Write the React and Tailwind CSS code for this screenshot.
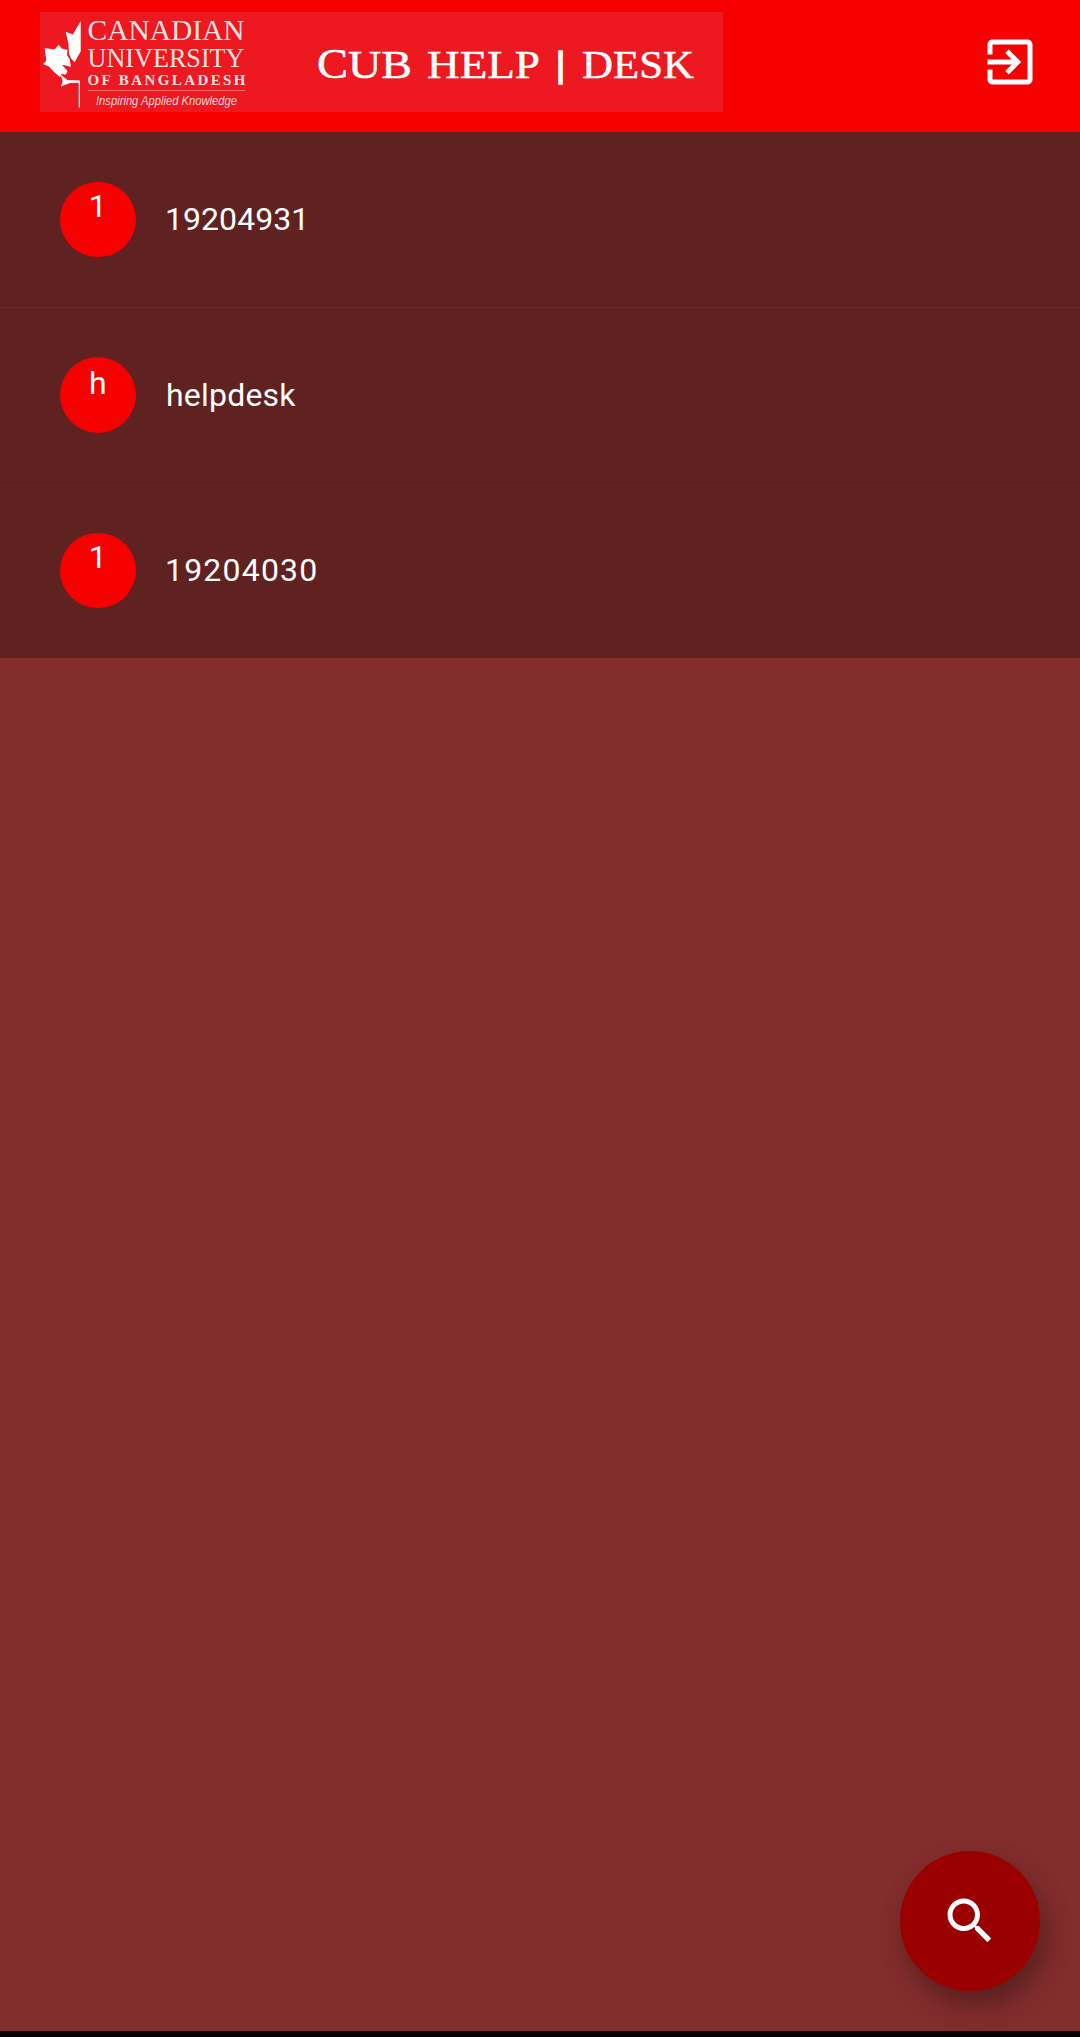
import React from "react";

const users = [
  { name: "19204931", text: "tracking-[0.05px]", initial: "pt-[5px]" },
  { name: "helpdesk", text: "pl-px pt-px tracking-[0.2px]", initial: "pt-[7px]" },
  { name: "19204030", text: "tracking-[1.2px]", initial: "pt-[5px]" },
];

function Banner() {
  return (
    <svg width="683" height="100" viewBox="40 12 683 100" className="block bg-[#ed1820]" fill="#fff">
      <path d="M80.7 21.3V51.5L77.5 57L74.7 62.3L71 58.5L69 54L68.5 44L65.7 31.7L73 34.5L76 29Z" />
      <path d="M58.7 44.7L62 48.5L67.5 50L67 55L69.5 59L71 66.7L62 64.7L67.5 71L66 74.5L61.5 74L60 77L54 72L49 66.5L43 64L46.3 60.7L44.7 48.3L54.7 49.3Z" />
      <path d="M60.5 74.5L67.3 80L80 80.5V107.5H78.7V82.7L70 83L61 86.5L62.7 81Z" />
      <g fontFamily="'Liberation Serif', serif" fillOpacity=".9">
        <text x="87.5" y="40" fontSize="30" textLength="157" lengthAdjust="spacingAndGlyphs">CANADIAN</text>
        <text x="87.5" y="67" fontSize="28" textLength="157" lengthAdjust="spacingAndGlyphs">UNIVERSITY</text>
        <text x="87.5" y="85" fontSize="15" fontWeight="700" textLength="158" lengthAdjust="spacing">OF BANGLADESH</text>
      </g>
      <rect x="88" y="90" width="157" height="1" fillOpacity=".35" />
      <text x="96" y="105" fontSize="12.5" fontStyle="italic" fontFamily="'Liberation Sans', sans-serif" fillOpacity=".82" textLength="141" lengthAdjust="spacingAndGlyphs">Inspiring Applied Knowledge</text>
      <g fontFamily="'Liberation Serif', serif" stroke="#fff" strokeWidth=".5">
        <text x="317" y="78" fontSize="43" textLength="31" lengthAdjust="spacingAndGlyphs">C</text>
        <text x="348" y="78" fontSize="41" textLength="64" lengthAdjust="spacingAndGlyphs">UB</text>
        <text x="427" y="78" fontSize="41" textLength="113" lengthAdjust="spacingAndGlyphs">HELP</text>
        <text x="582" y="78" fontSize="41" textLength="112" lengthAdjust="spacingAndGlyphs">DESK</text>
        <text x="556" y="77" fontSize="35" fontFamily="'Liberation Sans', sans-serif" strokeWidth="1.6">|</text>
      </g>
    </svg>
  );
}

export default function App() {
  return (
    <div className="flex h-[2037px] w-[1080px] flex-col overflow-hidden bg-[#832d2d] font-['Roboto',sans-serif] text-[32px] text-white">
      <header className="flex h-[132px] shrink-0 items-start justify-between bg-[#f60000] pt-3 pr-10 pl-10">
        <Banner />
        <button aria-label="Log out" className="mt-5 block">
          <svg width="60" height="60" viewBox="0 0 24 24" fill="currentColor">
            <path d="M10.09 15.59L11.5 17l5-5-5-5-1.41 1.41L12.67 11H3v2h9.67l-2.58 2.59zM19 3H5c-1.11 0-2 .9-2 2v4h2V5h14v14H5v-4H3v4c0 1.1.89 2 2 2h14c1.1 0 2-.9 2-2V5c0-1.1-.9-2-2-2z" />
          </svg>
        </button>
      </header>
      <ul className="h-[526px] shrink-0 bg-[#602121]">
        {users.map((user, i) => (
          <li
            key={user.name}
            className={
              "flex h-[175.5px] items-center border-b pl-[60px] " +
              (i === 0 ? "border-[#702629]" : i === 1 ? "border-[#591d1e]" : "border-transparent")
            }
          >
            <span className={"flex size-[75.5px] justify-center rounded-full bg-[#f60000] leading-[38px] " + user.initial}>
              {user.name[0]}
            </span>
            <span className={"ml-[29.5px] leading-[38px] " + user.text}>{user.name}</span>
          </li>
        ))}
      </ul>
      <main className="flex flex-1 items-end justify-end pr-10 pb-10">
        <button
          aria-label="Search"
          className="flex size-[140px] items-center justify-center rounded-full bg-[#9b0000] shadow-[6px_14px_28px_rgba(0,0,0,0.32)]"
        >
          <svg width="60" height="60" viewBox="0 0 24 24" fill="currentColor">
            <path d="M15.5 14h-.79l-.28-.27C15.41 12.59 16 11.11 16 9.5 16 5.91 13.09 3 9.5 3S3 5.91 3 9.5 5.91 16 9.5 16c1.61 0 3.09-.59 4.23-1.57l.27.28v.79l5 4.99L20.49 19l-4.99-5zm-6 0C7.01 14 5 11.99 5 9.5S7.01 5 9.5 5 14 7.01 14 9.5 11.99 14 9.5 14z" />
          </svg>
        </button>
      </main>
      <footer className="h-[6px] shrink-0 bg-black" />
    </div>
  );
}
